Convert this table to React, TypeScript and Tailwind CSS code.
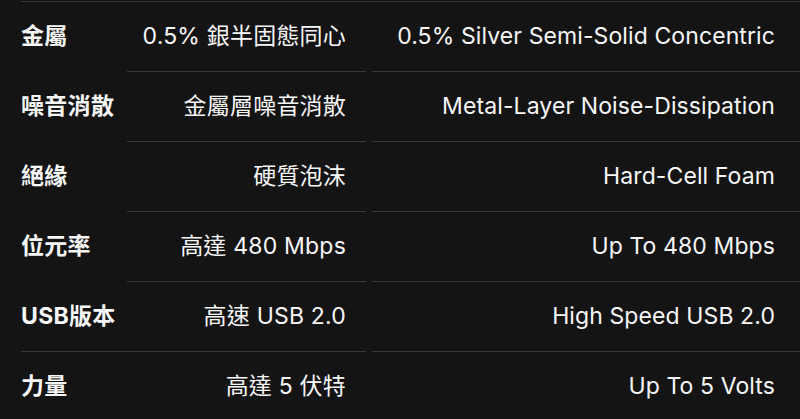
import React from "react";

const rows = [
  { label: "金屬", zh: "0.5% 銀半固態同心", en: "0.5% Silver Semi-Solid Concentric" },
  { label: "噪音消散", zh: "金屬層噪音消散", en: "Metal-Layer Noise-Dissipation" },
  { label: "絕緣", zh: "硬質泡沫", en: "Hard-Cell Foam" },
  { label: "位元率", zh: "高達 480 Mbps", en: "Up To 480 Mbps" },
  { label: "USB版本", zh: "高速 USB 2.0", en: "High Speed USB 2.0" },
  { label: "力量", zh: "高達 5 伏特", en: "Up To 5 Volts" },
];

export default function App() {
  return (
    <div
      className="w-full h-[419px] overflow-hidden bg-[#141414] text-[#f7f7f7] pl-[21px]"
      style={{ fontFamily: 'Inter, "Noto Sans CJK TC", sans-serif' }}
    >
      <div className="mt-[1px] h-px bg-[#3a3a3a]" />
      {rows.map((r, i) => {
        const first = i === 0;
        const last = i === rows.length - 1;
        const b = first ? "h-[69px]" : "h-[70px] border-t border-[#3a3a3a]";
        return (
          <div key={i} className="flex">
            <div
              className={`w-[106px] flex items-center font-bold text-[23px] tracking-[0.3px] ${
                last ? "h-[70px] border-t border-[#3a3a3a]" : first ? "h-[69px]" : "h-[70px] border-t border-transparent"
              }`}
            >
              {r.label}
            </div>
            <div className={`w-[239px] flex items-center justify-end pr-[20px] text-[23px] tracking-[0.2px] ${b}`}>
              {r.zh}
            </div>
            <div className="w-[6px]" />
            <div className={`flex-1 flex items-center justify-end pr-[25px] text-[23px] tracking-[0.1px] ${b}`}>
              {r.en}
            </div>
          </div>
        );
      })}
    </div>
  );
}
